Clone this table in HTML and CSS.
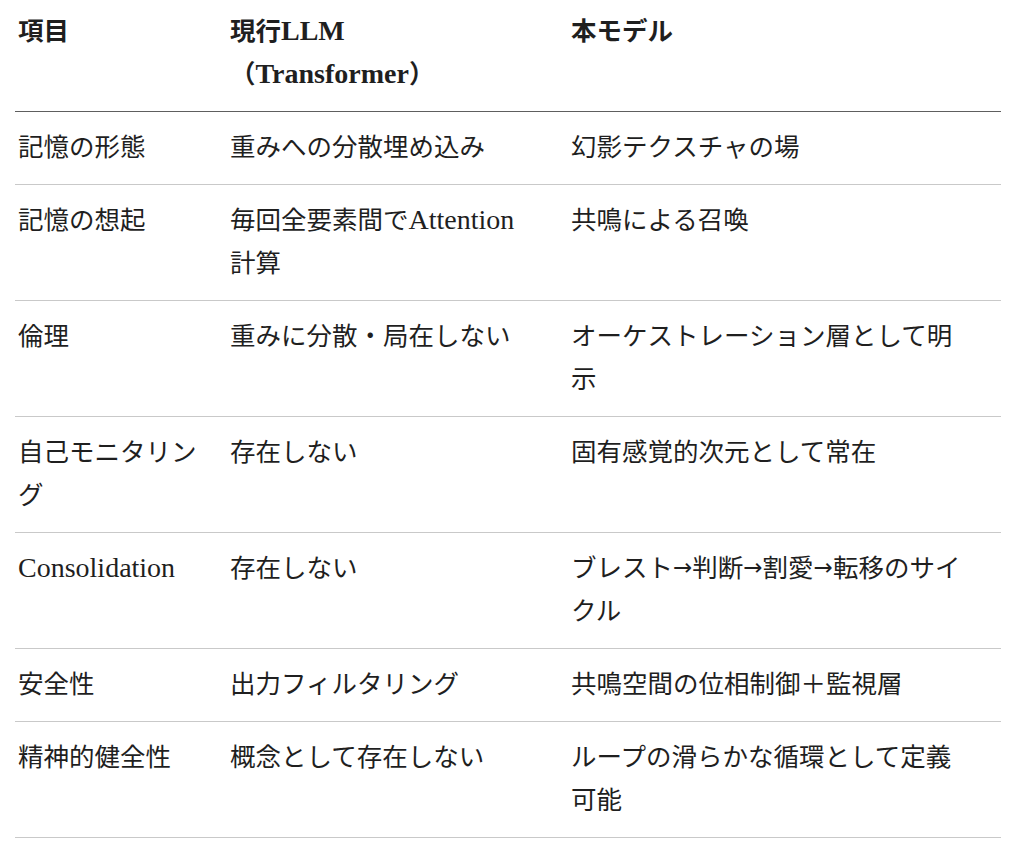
FILE: index.html
```html
<!DOCTYPE html>
<html lang="ja">
<head>
<meta charset="utf-8">
<title>比較表</title>
<link rel="stylesheet" href="styles.css">
</head>
<body>
<div class="wrap">
<table class="cmp">
  <colgroup>
    <col class="c1"><col class="c2"><col class="c3">
  </colgroup>
  <thead>
    <tr>
      <th>項目</th>
      <th>現行<span class="en">LLM</span><br>（<span class="en">Transformer</span>）</th>
      <th>本モデル</th>
    </tr>
  </thead>
  <tbody>
    <tr><td>記憶の形態</td><td>重みへの分散埋め込み</td><td>幻影テクスチャの場</td></tr>
    <tr><td>記憶の想起</td><td>毎回全要素間で<span class="en">Attention</span>計算</td><td>共鳴による召喚</td></tr>
    <tr><td>倫理</td><td>重みに分散・局在しない</td><td>オーケストレーション層として明示</td></tr>
    <tr><td>自己モニタリング</td><td>存在しない</td><td>固有感覚的次元として常在</td></tr>
    <tr><td><span class="en">Consolidation</span></td><td>存在しない</td><td>ブレスト<span class="ar">→</span>判断<span class="ar">→</span>割愛<span class="ar">→</span>転移のサイクル</td></tr>
    <tr><td>安全性</td><td>出力フィルタリング</td><td>共鳴空間の位相制御＋監視層</td></tr>
    <tr><td>精神的健全性</td><td>概念として存在しない</td><td>ループの滑らかな循環として定義可能</td></tr>
  </tbody>
</table>
</div>
</body>
</html>
```
FILE: styles.css
```css
html, body {
  margin: 0;
  padding: 0;
  background: #ffffff;
}
body {
  font-family: "Liberation Serif", "Noto Sans CJK JP", serif;
  color: #1f1f1f;
}
.wrap {
  padding: 0 23px 0 15px;
}
.cmp {
  width: 986px;
  border-collapse: collapse;
  table-layout: fixed;
  font-size: 25.5px;
  line-height: 43px;
}
.c1 { width: 199px; }
.c2 { width: 341px; }
.c3 { width: 446px; }
.cmp th {
  text-align: left;
  font-weight: 700;
  vertical-align: top;
  padding: 10px 30px 15px 16px;
  border-bottom: 1px solid #5e5e5e;
}
.cmp td {
  vertical-align: top;
  padding: 14px 30px 15px 16px;
  border-bottom: 1px solid #c9c9c9;
  word-break: break-all;
  line-break: anywhere;
}
.cmp td:nth-child(3) {
  padding-right: 28px;
}
.cmp th:first-child,
.cmp td:first-child {
  padding-left: 3px;
  padding-right: 16px;
}
.en {
  font-size: 28px;
  line-height: 1;
}
.ar {
  font-family: "DejaVu Sans", sans-serif;
  font-size: 23px;
  line-height: 1;
  vertical-align: 2px;
}
```
